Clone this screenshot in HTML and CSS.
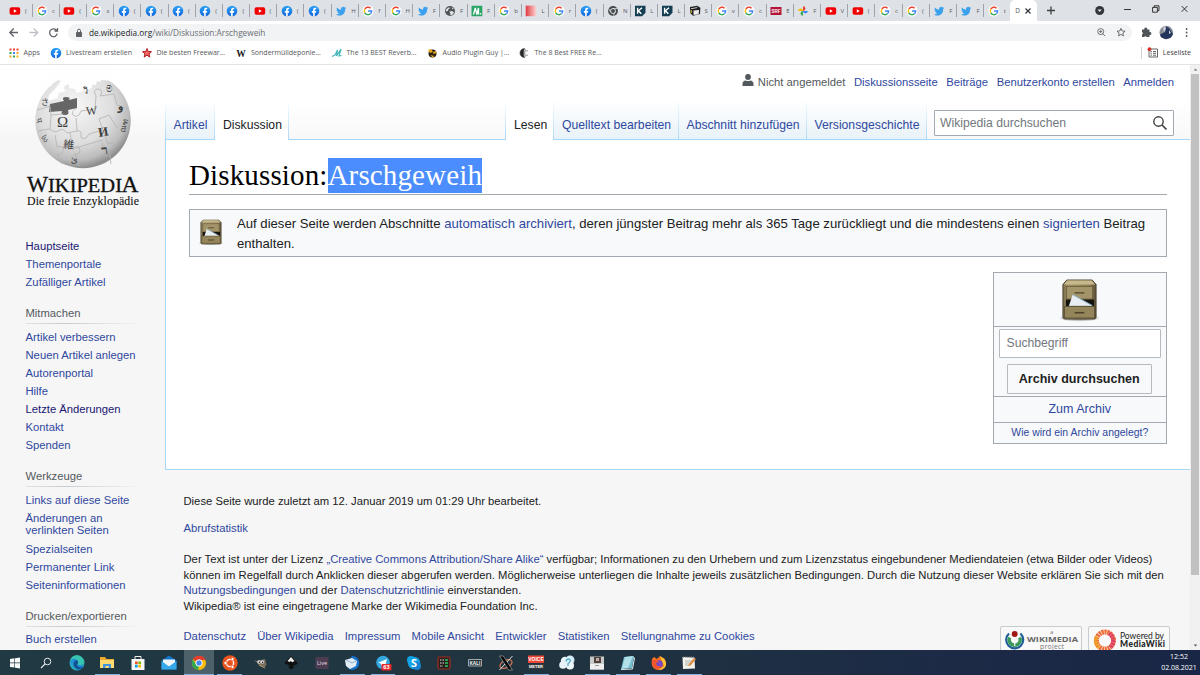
FILE: index.html
```html
<!DOCTYPE html>
<html lang="de">
<head>
<meta charset="utf-8">
<title>Diskussion:Arschgeweih – Wikipedia</title>
<link rel="stylesheet" href="styles.css">
</head>
<body>
<svg class="defs" width="0" height="0" aria-hidden="true">
  <defs>
    <linearGradient id="fbg" x1="0" y1="0" x2="0" y2="1"><stop offset="0" stop-color="#2aa4f6"/><stop offset="1" stop-color="#1264dc"/></linearGradient>
    <linearGradient id="redg"><stop offset="0" stop-color="#e23a40"/><stop offset="1" stop-color="#fbd5d5"/></linearGradient>
    <linearGradient id="wood" x1="0" y1="0" x2="1" y2="0"><stop offset="0" stop-color="#75684a"/><stop offset=".15" stop-color="#aa9a6e"/><stop offset=".8" stop-color="#958459"/><stop offset="1" stop-color="#5c5038"/></linearGradient>
    <radialGradient id="shadow"><stop offset="0" stop-color="#333" stop-opacity=".8"/><stop offset="1" stop-color="#333" stop-opacity="0"/></radialGradient>
    <radialGradient id="ball" cx=".42" cy=".35" r=".65"><stop offset="0" stop-color="#f6f6f6"/><stop offset=".6" stop-color="#dedede"/><stop offset=".87" stop-color="#bcbcbc"/><stop offset="1" stop-color="#8d8d8d"/></radialGradient>
    <linearGradient id="edge" x1="0" y1="1" x2="1" y2="0"><stop offset="0" stop-color="#35c1b1"/><stop offset=".5" stop-color="#1b86dc"/><stop offset="1" stop-color="#4bd06a"/></linearGradient>
  </defs>
  <symbol id="yt" viewBox="0 0 12 12"><rect x=".6" y="2.3" width="10.6" height="7.4" rx="1.8" fill="#f00000"/><path d="M4.8 4.2v3.6L7.8 6z" fill="#fff"/></symbol>
  <symbol id="go" viewBox="0 0 12 12"><circle cx="6" cy="6" r="5.5" fill="#fff"/><g fill="none" stroke-width="1.4"><path d="M8.6 3.2A3.7 3.7 0 0 0 2.8 4.2" stroke="#ea4335"/><path d="M2.8 4.2a3.7 3.7 0 0 0 0 3.6" stroke="#fbbc05"/><path d="M2.8 7.8a3.7 3.7 0 0 0 5.6 1" stroke="#34a853"/><path d="M8.4 8.8A3.6 3.6 0 0 0 9.7 6H6" stroke="#4285f4"/></g></symbol>
  <symbol id="fb" viewBox="0 0 12 12"><circle cx="6" cy="6" r="5.3" fill="url(#fbg)"/><path d="M5.1 11.2V7.7H3.8V6h1.3V4.9c0-1.5.9-2.2 2-2.2l1.1.1v1.4h-.7c-.6 0-.8.4-.8.8v1h1.5l-.3 1.7H6.7v3.5z" fill="#fff"/></symbol>
  <symbol id="tw" viewBox="0 0 12 12"><path d="M1.5 9.3c1.2.1 2.1-.2 2.8-.8-.9-.1-1.6-.6-1.9-1.4h.9C2.3 6.9 1.6 6 1.6 5l.9.3C1.6 4.5 1.4 3.300 1.900 2.400c1 1.300 2.500 2 4.200 2.100-.4-1.900 1-2.700 2-2.700.7 0 1.200.3 1.600.7l1.300-.5-.8 1.200 1-.2-1 1C10.300 8.300 7.400 10.700 4.500 10.600c-1.100 0-2.200-.3-3-.9z" fill="#3ba1ee"/></symbol>
  <symbol id="globe" viewBox="0 0 12 12"><circle cx="6" cy="6" r="5" fill="#53575b"/><path d="M2 4.500 3.800 3l2-.8-.4 1.600-1.600 1 .2 1.200L2 6.200zM5.500 6.500 8 6l2 1.500L8 10l-1.800-.2.200-1.400zM8 2.200l1.800 1.600-1.600.4z" fill="#e4e6e9"/></symbol>
  <symbol id="mm" viewBox="0 0 12 12"><rect x=".5" y=".8" width="10.800" height="10.400" rx=".8" fill="#2aa566"/><path d="M2.500 9.500 4.300 3l1.500 6.500L7.500 3v6.500M9.500 8v1.500" fill="none" stroke="#fff" stroke-width="1.300"/></symbol>
  <symbol id="red" viewBox="0 0 12 12"><rect x=".7" y=".6" width="10.600" height="10.600" fill="url(#redg)"/></symbol>
  <symbol id="chr" viewBox="0 0 12 12"><circle cx="6" cy="6" r="4.900" fill="#474b50"/><circle cx="6" cy="6" r="2.500" fill="#474b50" stroke="#e4e6e9" stroke-width=".9"/><path d="M6 3.500h4.500M3.800 7.200 1.700 3.700M8.200 7.200 6 10.900" stroke="#e4e6e9" stroke-width=".7"/></symbol>
  <symbol id="kk" viewBox="0 0 12 12"><path d="M1 .8h10.500v7L8 11.200H1z" fill="#153e52"/><path d="M3.600 2.800v6M8 2.800 4.400 5.700 7.300 8.800" fill="none" stroke="#fff" stroke-width="1.400"/></symbol>
  <symbol id="cam" viewBox="0 0 12 12"><path d="m1 2 7-1.300 3.400 2L11 9 4 10.800 1.200 8z" fill="#222"/><path d="m4.500 5.400 5.500-.5-.4 4.300-5 .8zM2 3.200l6-1 .3.800-6 1z" fill="#eee"/><path d="M2.200 5v3" stroke="#f7d44a"/></symbol>
  <symbol id="srf" viewBox="0 0 12 12"><rect x=".5" y="2" width="11" height="8" fill="#b21535"/><text x="6" y="7.700" font-family="Liberation Sans" font-size="4.500" font-weight="700" text-anchor="middle" fill="#fff">SRF</text></symbol>
  <symbol id="ph" viewBox="0 0 12 12"><path d="M6 6V1.200A2.400 2.400 0 0 1 6 6z" fill="#ea4335"/><path d="M6 6h4.800A2.400 2.400 0 0 1 6 6z" fill="#4285f4"/><path d="M6 6v4.800A2.400 2.400 0 0 1 6 6z" fill="#34a853"/><path d="M6 6H1.200A2.400 2.400 0 0 1 6 6z" fill="#fbbc05"/></symbol>
  <symbol id="cabinet" viewBox="0 0 40 44"><ellipse cx="20" cy="40" rx="22" ry="3.800" fill="url(#shadow)"/><path d="M3 5.500 7 1h26l4 4.500V39q0 2-2 2H5q-2 0-2-2z" fill="url(#wood)" stroke="#4d4430" stroke-width="1"/><path d="M4 5.500 7.500 1.600h25L36 5.500z" fill="#c5b88d"/><rect x="6.500" y="7.500" width="27" height="13" fill="#a4946a" stroke="#6b5d3c"/><path d="M15 14.200h10" stroke="#574a2e" stroke-width="1.400"/><path d="M6 21h29v8H6z" fill="#15130e"/><path d="m9 28 4-12 21 12z" fill="#e8edf2"/><path d="m13 16 20 11" stroke="#8ab4cb" stroke-width="1"/><path d="M4.500 28h31v12h-31z" fill="#95855a" stroke="#5c4f34"/><path d="M15 34.500h10" stroke="#4f4329" stroke-width="1.600"/></symbol>
</svg>

<header class="browser">
  <div class="tabstrip">
    <div class="tab"><svg><use href="#yt"/></svg><span>(</span></div>
    <div class="tab"><svg><use href="#go"/></svg><span>c</span></div>
    <div class="tab"><svg><use href="#yt"/></svg><span>(</span></div>
    <div class="tab"><svg><use href="#go"/></svg><span>s</span></div>
    <div class="tab"><svg><use href="#fb"/></svg><span>(</span></div>
    <div class="tab"><svg><use href="#fb"/></svg><span>(</span></div>
    <div class="tab"><svg><use href="#fb"/></svg><span>(</span></div>
    <div class="tab"><svg><use href="#fb"/></svg><span>(</span></div>
    <div class="tab"><svg><use href="#fb"/></svg><span>(</span></div>
    <div class="tab"><svg><use href="#yt"/></svg><span>(</span></div>
    <div class="tab"><svg><use href="#fb"/></svg><span>(</span></div>
    <div class="tab"><svg><use href="#fb"/></svg><span>(</span></div>
    <div class="tab"><svg><use href="#tw"/></svg><span>H</span></div>
    <div class="tab"><svg><use href="#go"/></svg><span>f</span></div>
    <div class="tab"><svg><use href="#go"/></svg><span>H</span></div>
    <div class="tab"><svg><use href="#tw"/></svg><span>F</span></div>
    <div class="tab"><svg><use href="#globe"/></svg><span>F</span></div>
    <div class="tab"><svg><use href="#mm"/></svg><span>F</span></div>
    <div class="tab"><svg><use href="#go"/></svg><span>b</span></div>
    <div class="tab"><svg><use href="#red"/></svg><span>L</span></div>
    <div class="tab"><svg><use href="#go"/></svg><span>r</span></div>
    <div class="tab"><svg><use href="#fb"/></svg><span>(</span></div>
    <div class="tab"><svg><use href="#chr"/></svg><span>N</span></div>
    <div class="tab"><svg><use href="#kk"/></svg><span>L</span></div>
    <div class="tab"><svg><use href="#kk"/></svg><span>L</span></div>
    <div class="tab"><svg><use href="#cam"/></svg><span>S</span></div>
    <div class="tab"><svg><use href="#go"/></svg><span>v</span></div>
    <div class="tab"><svg><use href="#go"/></svg><span>c</span></div>
    <div class="tab"><svg><use href="#srf"/></svg><span>E</span></div>
    <div class="tab"><svg><use href="#ph"/></svg><span>F</span></div>
    <div class="tab"><svg><use href="#yt"/></svg><span>V</span></div>
    <div class="tab"><svg><use href="#yt"/></svg><span>(</span></div>
    <div class="tab"><svg><use href="#go"/></svg><span>c</span></div>
    <div class="tab"><svg><use href="#go"/></svg><span>(</span></div>
    <div class="tab"><svg><use href="#tw"/></svg><span>F</span></div>
    <div class="tab"><svg><use href="#tw"/></svg><span>F</span></div>
    <div class="tab last"><svg><use href="#go"/></svg><span>t</span></div>
    <div class="tab-active"><span>D</span><svg viewBox="0 0 8 8"><path d="m1.500 1.500 5 5m0-5-5 5" stroke="#33373b" stroke-width="1.200"/></svg></div>
    <svg class="window-controls" viewBox="0 0 162 21"><path d="M14 6.500v8M10 10.500h8" stroke="#3c4043" stroke-width="1.300"/><circle cx="62.700" cy="10.500" r="4.500" fill="#32363a"/><path d="M60.500 9.500h4.400l-2.200 2.600z" fill="#dee1e6"/><g fill="none" stroke="#222" stroke-width=".9"><path d="M87 9.500h7M115.600 7.400h4.800v4.800h-4.800zM117.200 7.200V5.800h4.800v4.800h-1.400M144.600 6l5.800 5.800m0-5.800-5.800 5.800"/></g></svg>
  </div>
  <div class="toolbar">
    <svg class="nav-icons" viewBox="0 0 68 24"><g fill="none" stroke="#5f6368" stroke-width="1.300"><path d="M18 11.500H9.800M13.800 7.500l-4 4 4 4"/><path d="M29.500 11.500h8.200M33.700 7.500l4 4-4 4" stroke="#bdc1c6"/><path d="M56.700 9.500a3.900 3.900 0 1 0 .6 3.200M57.500 7v3h-3"/></g></svg>
    <div class="omnibox">
      <svg class="lock" viewBox="0 0 8 10"><rect x="1" y="4" width="6" height="5" rx=".7" fill="#5f6368"/><path d="M2.500 4V2.700a1.500 1.500 0 0 1 3 0V4" fill="none" stroke="#5f6368"/></svg>
      <span class="url"><b>de.wikipedia.org</b>/wiki/Diskussion:Arschgeweih</span>
      <svg class="omni-actions" viewBox="0 0 36 17"><g fill="none" stroke="#5f6368" stroke-width=".9"><circle cx="8.700" cy="7.600" r="3"/><path d="m10.900 9.800 2.300 2.300M7.200 7.600h3M8.700 6.100v3M29 4.300l1.200 2.700 2.900.2-2.200 1.900.7 2.800-2.600-1.500-2.500 1.500.7-2.800L25 7.200l2.800-.2z"/></g></svg>
    </div>
    <svg class="toolbar-actions" viewBox="0 0 64 24"><path d="M6 8.500h2.300a1.500 1.500 0 1 1 2.900 0H13.500v2.500a1.500 1.500 0 1 1 0 2.900v2.200h-2.800a1.300 1.300 0 0 0-2.500 0H6v-2.600a1.400 1.400 0 0 0 0-2.600z" fill="#505458"/><circle cx="30.300" cy="11.500" r="6.800" fill="#8a9098"/><path d="M24 13.500 29 11l1-5.500 3 1.500 4 6-2 3.500-5 1.800-5-2z" fill="#25345c"/><path d="m27 7 2-2 1 3-2 3zM33 9l2 3-2 1z" fill="#c8ccd4"/><g fill="#505458"><circle cx="50.600" cy="8" r=".9"/><circle cx="50.600" cy="11.500" r=".9"/><circle cx="50.600" cy="15" r=".9"/></g></svg>
  </div>
  <div class="bookmarks">
    <svg viewBox="0 0 12 12"><path d="M1.500 1.500h2v2h-2z" fill="#ea4335"/><path d="M5 1.500h2v2H5zM8.500 1.500h2v2h-2z" fill="#ea4335"/><path d="M1.500 5h2v2h-2z" fill="#34a853"/><path d="M5 5h2v2H5z" fill="#4285f4"/><path d="M8.500 5h2v2h-2zM1.500 8.500h2v2h-2z" fill="#f0a51a"/><path d="M5 8.500h2v2H5z" fill="#34a853"/><path d="M8.500 8.500h2v2h-2z" fill="#fbbc05"/></svg><span class="bm-t1">Apps</span>
    <svg viewBox="0 0 12 12"><use href="#fb"/></svg><span class="bm-t2">Livestream erstellen</span>
    <svg viewBox="0 0 12 12"><path d="m6 1.500 1.200 3 3.300.2-2.500 2.100.8 3.300L6 8.200l-2.800 1.900.8-3.300-2.500-2.100 3.300-.2z" fill="#e66" stroke="#b11e1e"/></svg><span class="bm-t3">Die besten Freewar...</span>
    <svg viewBox="0 0 12 12"><text x="6" y="9.500" text-anchor="middle" font-family="Liberation Serif" font-size="9.500" font-weight="700" fill="#222">W</text></svg><span class="bm-t4">Sondermülldeponie...</span>
    <svg viewBox="0 0 12 12"><path d="M1 9.500 4 8l2.500-5-1 6L10 2 8 9l2.500-.5" fill="none" stroke="#43b7b8" stroke-width="1.200"/></svg><span class="bm-t5">The 13 BEST Reverb...</span>
    <svg viewBox="0 0 12 12"><circle cx="5.500" cy="6.500" r="4" fill="#292013"/><path d="m1 3 3-1 2 3-3 1zM6 5l3-1 .5 2-3 1zM3.500 8l4 1-2 1.500z" fill="#e6a91c"/></svg><span class="bm-t6">Audio Plugin Guy |...</span>
    <svg viewBox="0 0 12 12"><path d="M5.500 1.500C-.5 2-.5 10 5.500 10.500 4 7.500 4 4.500 5.500 1.500z" fill="#26282a" stroke="#26282a" stroke-width=".6"/><path d="M6.500 2.500c-1 2-1 5 0 7M8 3v1.500m0 3V9" stroke="#777" fill="none"/></svg><span class="bm-t7">The 8 Best FREE Re...</span>
    <div class="readinglist"><svg viewBox="0 0 12 12"><path d="M2 2h8.500v8H2zM3.500 4.500h1.400m1.100 0h3M3.500 6.300h1.400m1.100 0h3M3.500 8.200h1.400m1.100 0h3" fill="none" stroke="#555" stroke-width=".9"/><circle cx="2.500" cy="2.200" r="1.900" fill="#d93025"/></svg><span>Leseliste</span></div>
  </div>
</header>

<div class="page">
  <aside class="sidebar">
    <svg class="logo" viewBox="0 0 126 140">
      <circle cx="63" cy="51.500" r="47.700" fill="url(#ball)"/>
      <path d="M36 0H92V12L81 11l-1 2-3-1-1 4q-5-2-4 3l-15 5-2-4-6-1q1-5-3-3t0 6l-7 2-1 5-10 3 1-6 6-6 6-8-3-1-4 2-3 4-4 1-3 4-4 1 4-9 9-8z" fill="#fefefe"/>
      <path d="m30 35 14-3q-3-4 2-4t3 3l8-2v10l-9 2q2 5-3 5t-3-4l-13 1z" fill="#666"/>
      <g fill="none" stroke="#b2b2b2" stroke-width=".8"><path d="M17 41q8-2 13-4l1 9 12-1M57 39q-6 3-4 7 3 3 6 0l2-4 14-2 1-13q-4-7 3-7 5 2 1 7l14-2 3 11 11 4M31 46l-1 14-12 2M30 60q5 5 10 1 3-2 7 3l10-2-1-13M57 62q5-1 4 4t5 3l3-4 14-4 5 14q6-3 6 2 0 5-5 3l2 15M83 61l-4-11 10-4 8 13M50 64l3 15q6-3 7 2 0 5-5 4l4 12M56 79l16-5 11-3M35 66l2 12q8-2 6 4-2 5-6 3l5 10M82 74l5 14"/></g>
      <g fill="#3d3d3d" font-family="'Liberation Serif', 'Noto Sans CJK JP', serif"><text x="37" y="58" font-size="15">Ω</text><text x="66" y="46" font-size="12" transform="rotate(-3 66 46)">W</text><text x="79" y="68" font-size="13" font-weight="700" transform="rotate(-10 79 68)">И</text><text x="43" y="79" font-size="11" transform="rotate(5 43 79)">維</text><text x="82" y="86" font-size="13" font-weight="700" transform="rotate(-8 82 86)">ר</text><text x="63" y="25" font-size="9">วิ</text><text x="86" y="23" font-size="9">ම</text><text x="98" y="41" font-size="11" font-weight="700">و</text><text x="21" y="36" font-size="8">さ</text><text x="19" y="52" font-size="8" transform="rotate(75 19 49)">प</text><text x="21" y="68" font-size="7" transform="rotate(60 21 68)">სა</text><text x="51" y="94" font-size="9" transform="rotate(-8 51 94)">ئ</text><text x="102" y="60" font-size="8" transform="rotate(-80 106 60)">ณฑ</text></g>
      <g fill="#111" stroke="#111" stroke-width=".3" font-family="Liberation Serif"><text x="7" y="122.500" font-size="23.500" textLength="21" lengthAdjust="spacingAndGlyphs">W</text><text x="28" y="122.500" font-size="18.500" textLength="74" lengthAdjust="spacingAndGlyphs">IKIPEDI</text><text x="101.500" y="122.500" font-size="23.500" textLength="17" lengthAdjust="spacingAndGlyphs">A</text><text x="7" y="136" font-size="11.800" stroke-width=".1" textLength="112" lengthAdjust="spacing">Die freie Enzyklopädie</text></g>
    </svg>
    <nav class="portal first"><a class="visited">Hauptseite</a><a>Themenportale</a><a>Zufälliger Artikel</a></nav>
    <nav class="portal"><h3>Mitmachen</h3><a>Artikel verbessern</a><a>Neuen Artikel anlegen</a><a>Autorenportal</a><a>Hilfe</a><a class="visited">Letzte Änderungen</a><a>Kontakt</a><a>Spenden</a></nav>
    <nav class="portal"><h3>Werkzeuge</h3><a>Links auf diese Seite</a><a>Änderungen an<br>verlinkten Seiten</a><a>Spezialseiten</a><a>Permanenter Link</a><a>Seiteninformationen</a></nav>
    <nav class="portal"><h3>Drucken/exportieren</h3><a>Buch erstellen</a></nav>
  </aside>

  <div class="main">
    <div class="head">
      <div class="personal"><svg viewBox="0 0 12 12"><circle cx="6" cy="3" r="2.900" fill="#54595d"/><path d="M.5 12V9.800C.5 7.600 2.200 7 3.500 6.600q2.500 1 5 0c1.300.4 3 1 3 3.200V12z" fill="#54595d"/></svg><span>Nicht angemeldet</span><a>Diskussionsseite</a><a>Beiträge</a><a>Benutzerkonto erstellen</a><a>Anmelden</a></div>
      <div class="navtabs">
        <div class="vtab v1"><a>Artikel</a></div><div class="vtab on v2">Diskussion</div>
        <div class="tabgap"></div>
        <div class="vtab on v3">Lesen</div><div class="vtab v4"><a>Quelltext bearbeiten</a></div><div class="vtab v5"><a>Abschnitt hinzufügen</a></div><div class="vtab v6"><a>Versionsgeschichte</a></div>
        <div class="search"><span>Wikipedia durchsuchen</span><svg viewBox="0 0 16 16"><circle cx="6.500" cy="6.500" r="4.700" fill="none" stroke="#404244" stroke-width="1.400"/><path d="m10 10 4.500 4.500" stroke="#404244" stroke-width="1.700"/></svg></div>
      </div>
    </div>
    <main class="content">
      <h1>Diskussion:<mark>Arschgeweih</mark></h1>
      <div class="notice"><svg viewBox="0 0 40 44"><use href="#cabinet"/></svg><p>Auf dieser Seite werden Abschnitte <a>automatisch archiviert</a>, deren jüngster Beitrag mehr als 365 Tage zurückliegt und die mindestens einen <a>signierten</a> Beitrag<br>enthalten.</p></div>
      <div class="archive">
        <div class="archive-icon"><svg viewBox="0 0 40 44"><use href="#cabinet"/></svg></div>
        <div class="archive-form"><div class="field">Suchbegriff</div><div class="button">Archiv durchsuchen</div></div>
        <div class="archive-link"><a>Zum Archiv</a></div>
        <div class="archive-help"><a>Wie wird ein Archiv angelegt?</a></div>
      </div>
    </main>
    <footer class="footer">
      <p>Diese Seite wurde zuletzt am 12. Januar 2019 um 01:29 Uhr bearbeitet.</p>
      <p class="stat"><a>Abrufstatistik</a></p>
      <p class="license">Der Text ist unter der Lizenz <a>„Creative Commons Attribution/Share Alike“</a> verfügbar; Informationen zu den Urhebern und zum Lizenzstatus eingebundener Mediendateien (etwa Bilder oder Videos)<br>können im Regelfall durch Anklicken dieser abgerufen werden. Möglicherweise unterliegen die Inhalte jeweils zusätzlichen Bedingungen. Durch die Nutzung dieser Website erklären Sie sich mit den<br><a>Nutzungsbedingungen</a> und der <a>Datenschutzrichtlinie</a> einverstanden.<br>Wikipedia® ist eine eingetragene Marke der Wikimedia Foundation Inc.</p>
      <div class="footer-row">
        <div class="places"><a>Datenschutz</a><a>Über Wikipedia</a><a>Impressum</a><a>Mobile Ansicht</a><a>Entwickler</a><a>Statistiken</a><a>Stellungnahme zu Cookies</a></div>
        <div class="badge"><svg viewBox="0 0 80 29"><g fill="none" stroke-width="2.200"><path d="M8 6.500a8.500 8.500 0 1 0 11.400 0" stroke="#1f5d99"/><path d="M8.700 10.500a5.500 5.500 0 1 0 10 0" stroke="#3a9a5c" stroke-width="3.400"/><path d="M13.700 10v9" stroke="#f4f4f4" stroke-width="1.200"/></g><circle cx="13.700" cy="7" r="3" fill="#a01717"/><g font-family="Open Sans" fill="#777"><text x="49" y="6.700" font-size="6">a</text><text x="26" y="14.700" font-size="7.800" font-weight="700" fill="#666" textLength="51" lengthAdjust="spacingAndGlyphs">WIKIMEDIA</text><text x="39" y="22" font-size="6.800" textLength="24">project</text></g></svg></div>
        <div class="badge"><svg viewBox="0 0 80 29"><circle cx="16" cy="13.500" r="8.500" fill="none" stroke="#ed6c37" stroke-width="5" stroke-dasharray="2.200 .6"/><path d="M10 20.500a8.500 8.500 0 0 1-2-11" fill="none" stroke="#f2a52a" stroke-width="4" stroke-dasharray="2 .6"/><path d="M20 6.500a8.500 8.500 0 0 1 1 14" fill="none" stroke="#dc3c67" stroke-width="4" stroke-dasharray="2 .6"/><circle cx="16" cy="13.500" r="5.600" fill="#f9f9f9"/><g font-family="Lato" font-size="8.500" fill="#222"><text x="31" y="11.500" textLength="44">Powered by</text><text x="31" y="20" font-weight="900" textLength="45">MediaWiki</text></g></svg></div>
      </div>
    </footer>
  </div>
  <div class="scrollbar"><svg viewBox="0 0 10 8"><path d="m3 5 2-2 2 2z" fill="#777"/></svg><div class="thumb"></div><svg class="down" viewBox="0 0 10 8"><path d="m3 3 2 2 2-2z" fill="#555"/></svg></div>
</div>

<div class="taskbar">
  <div class="task"><svg viewBox="0 0 18 18"><path d="m4 4.900 4.400-.6v4.300H4zM9 4.200l5-.7v5.100H9zM4 9.300h4.400v4.300L4 13zM9 9.300h5v5.100l-5-.7z" fill="#f5f7f8"/></svg></div>
  <div class="task"><svg viewBox="0 0 18 18"><circle cx="10.500" cy="7.500" r="3.300" fill="none" stroke="#e7eaec"/><path d="m8 10-4 4" stroke="#e7eaec" stroke-width="1.100"/></svg></div>
  <div class="task"><svg viewBox="0 0 18 18"><circle cx="9" cy="9" r="7.500" fill="url(#edge)"/><path d="M7.500 7c-3 1-3 7 3 8.500 2 0 4-1 5-2.500-5 1.500-7-1-6.500-3.500l6 1C17 5 10 2 7.500 7z" fill="#12508e"/><path d="M2 7c4-4 9-1 8 2 0 1.300-1 1.500 1 2 3 .5 6-1 5.200-4C14 0 4-1 2 7z" fill="#37c3b2"/></svg></div>
  <div class="task open"><svg viewBox="0 0 18 18"><path d="M2 3h5l1.500 2H16v9H2z" fill="#e9aa2d"/><path d="M2 6h14v8H2z" fill="#ffdb72"/><path d="M5 14v-4h8v4h-2.300v-2H7.300v2z" fill="#3d94dc"/></svg></div>
  <div class="task"><svg viewBox="0 0 18 18"><path d="M6 5V2.500h6V5" fill="none" stroke="#eee"/><path d="M2.500 5h13v11h-13z" fill="#f7f7f7"/><path d="M6 7.500h2.700v2.700H6z" fill="#f25022"/><path d="M9.300 7.500H12v2.700H9.300z" fill="#7fba00"/><path d="M6 10.800h2.700v2.700H6z" fill="#00a4ef"/><path d="M9.300 10.800H12v2.700H9.300z" fill="#ffb900"/></svg></div>
  <div class="task"><svg viewBox="0 0 18 18"><path d="m1.500 6.500 7.500-5 7.500 5v9h-15z" fill="#1173c6"/><path d="M3 5.500h12V9l-6 4-6-4z" fill="#eef6fc"/><path d="m1.500 7 7.500 5.500L16.500 7v8.500h-15z" fill="#36a9ea"/></svg></div>
  <div class="task active"><svg viewBox="0 0 18 18"><circle cx="9" cy="9" r="7" fill="#fbbc05"/><path d="M9 9 3 5.400A7 7 0 0 1 15.500 6H9z" fill="#e33b2e"/><path d="m9 9-.7 7A7 7 0 0 1 2.900 5.500L6.500 11z" fill="#2da94f"/><circle cx="9" cy="9" r="3.200" fill="#4285f4" stroke="#fff"/></svg></div>
  <div class="task open"><svg viewBox="0 0 18 18"><circle cx="9" cy="9" r="7.700" fill="#e95420"/><circle cx="9" cy="9" r="3.600" fill="none" stroke="#fff" stroke-width="1.400"/><g fill="#fff" stroke="#e95420" stroke-width=".7"><circle cx="4.500" cy="9" r="1.600"/><circle cx="11.500" cy="5" r="1.600"/><circle cx="11.500" cy="13" r="1.600"/></g></svg></div>
  <div class="task"><svg viewBox="0 0 18 18"><path d="m3 6 3 1 3-1 5-1 1.500 6-2 2-5-1-2-3z" fill="#786e5d"/><circle cx="8" cy="8" r="1.700" fill="#eee"/><circle cx="11.500" cy="8" r="1.700" fill="#ddd"/><circle cx="8.300" cy="8.200" r=".7"/><circle cx="11.700" cy="8.200" r=".7"/><path d="m8 11 6 3" stroke="#ba9b69"/></svg></div>
  <div class="task"><svg viewBox="0 0 18 18"><path d="M9 2 3 8.300q-1 1.500 1.500 2l3 1-1 2L9 15.500l3-2-1-1.700 3.500-1.300q2-.7.500-2.200z" fill="#111"/><path d="M9 3 5.500 7l2 1 1.200-1 1.500 1.300L12.500 7z" fill="#eee"/></svg></div>
  <div class="task"><svg viewBox="0 0 18 18"><path d="M2.500 3h13v12h-13z" fill="#4b3c50"/><text x="9" y="11" text-anchor="middle" font-size="5.500" font-family="Open Sans" fill="#e4dce7">Live</text></svg></div>
  <div class="task open"><svg viewBox="0 0 18 18"><path d="M9 2a7 7 0 1 1-5.500 11C8 16 11 11 7 5z" fill="#1770c9"/><path d="m2 6 7-2 5 3-1 5-6 3-4-3z" fill="#e3edf6"/><path d="m3 6 6 3 4-2" fill="none" stroke="#8eaecb"/></svg></div>
  <div class="task open"><svg viewBox="0 0 18 18"><circle cx="9" cy="8.500" r="6.800" fill="#35a7df"/><path d="m4 8.700 9-3.800-1.800 7-2.500-1.600-1.600 1.600-.2-2.300z" fill="#fff"/><rect x="7.500" y="10" width="10" height="6.500" rx="1" fill="#e62929"/><text x="12.500" y="15" text-anchor="middle" font-size="5.500" font-family="Open Sans" font-weight="700" fill="#fff">63</text></svg></div>
  <div class="task"><svg viewBox="0 0 18 18"><circle cx="9" cy="9" r="6.200" fill="#12a3e6"/><circle cx="6" cy="6" r="4" fill="#12a3e6"/><circle cx="12" cy="12" r="4" fill="#1581d0"/><text x="9" y="13" text-anchor="middle" font-size="11" font-family="Open Sans" font-weight="700" fill="#fff">S</text></svg></div>
  <div class="task"><svg viewBox="0 0 18 18"><rect x="3" y="3" width="12" height="12" rx="1.500" fill="#28201e" stroke="#a22b20" stroke-width="1.200"/><path d="M5 6h4M5 9h4M5 12h3" stroke="#ddd" stroke-dasharray="1 .5"/><path d="M10 6h3M10 9h3M10 12h3" stroke="#2dc561" stroke-width="1.300"/></svg></div>
  <div class="task"><svg viewBox="0 0 18 18"><path d="M2.500 5.500h13v6.500h-13z" fill="#26343a" stroke="#c2c8ca" stroke-width=".8"/><text x="9" y="10.600" text-anchor="middle" font-size="4.800" font-family="Open Sans" font-weight="700" fill="#e8ebec">KALI</text></svg></div>
  <div class="task"><svg viewBox="0 0 18 18"><ellipse cx="9" cy="10" rx="6.500" ry="3.700" transform="rotate(-28 9 10)" fill="none" stroke="#d0724e" stroke-width="1.200"/><path d="M2.500 2h3.800l9.200 14h-3.800z" fill="#080808" stroke="#ccc" stroke-width=".5"/><path d="m15.500 2-5.500 6M8 10l-5.500 6" stroke="#eee" stroke-width=".9" fill="none"/></svg></div>
  <div class="task open"><svg viewBox="0 0 18 18"><path d="M1 1.500h16v7.500H1z" fill="#ed4434"/><path d="M1 10h16v5H1z" fill="#35393b"/><g text-anchor="middle" font-family="Liberation Sans" font-weight="700" fill="#fff"><text x="9" y="7.200" font-size="5">VOICE</text><text x="9" y="14.200" font-size="4">METER</text></g></svg></div>
  <div class="task"><svg viewBox="0 0 18 18"><circle cx="7" cy="7" r="4.200" fill="#e8f3f7"/><circle cx="12" cy="6" r="4.500" fill="#d5edf4"/><circle cx="5" cy="11" r="3.800" fill="#e8f3f7"/><circle cx="12" cy="11.500" r="4" fill="#eef6f9"/><path d="M8 7.500q.5-3 3-2.300t.5 3.300l-1.500 1v2.500" fill="none" stroke="#4aa5c6" stroke-width="1.200"/></svg></div>
  <div class="task open"><svg viewBox="0 0 18 18"><path d="M2 2.500h14v13H2z" fill="#c7cac9"/><path d="M6 3h7v6H6z" fill="#51413f"/><path d="M8 4h3v3H8z" fill="#bcaaa6"/><path d="M2 10h14v5.500H2z" fill="#eee"/><path d="M7 11h4v1H7z" fill="#999"/></svg></div>
  <div class="task open"><svg viewBox="0 0 18 18"><path d="m5 3 10-1-2 12-11 1z" fill="#74bdcc"/><path d="m6 3 8-1-5 12-6 .8z" fill="#b1e1e8"/><path d="M14 4h1.500L13.500 15 2 15.500" fill="none" stroke="#e6edf0"/></svg></div>
  <div class="task open"><svg viewBox="0 0 18 18"><path d="M2 5 4 3l3 2 3-3 2 3 2-1c3 4 3 11-5 12C2 16 1 10 2 5z" fill="#fa701d"/><path d="M10 2c5 3 6 5 6 8 0 4-4 6-7 6l5-4z" fill="#ffc733"/><circle cx="9" cy="10" r="3.800" fill="#7749c5"/><path d="M2 6h4l3 2-3 1 1 3h4l-3 3c-4 0-6-3-6-9z" fill="#f2542f"/></svg></div>
  <div class="task open"><svg viewBox="0 0 18 18"><path d="m2.500 3 12 .5.500 11-12 .5z" fill="#f2f2eb"/><path d="M5 7h7M5 9h6M5 11h6" stroke="#999" stroke-width=".7"/><path d="m9 10 5-6 2 1-5 6-3 1z" fill="#e18c3c"/><path d="M3 3h11" stroke="#777" stroke-dasharray="1 1"/></svg></div>
  <div class="clock"><span>12:52</span><span>02.08.2021</span></div>
</div>
</body>
</html>
```
FILE: styles.css
```css
* { box-sizing: border-box; }
body { margin: 0; width: 1200px; height: 675px; overflow: hidden; background: #f6f6f6; font-family: "Liberation Sans", Arial, "Noto Sans CJK JP", sans-serif; color: #202122; }
svg { display: block; flex: none; }
.defs { position: absolute; }
a { color: #2f489f; text-decoration: none; }
a.visited { color: #1a1675; }
p, h1, h3 { margin: 0; font-weight: 400; }

/* Browser window */
.browser { height: 65px; background: #fff; border-bottom: 1px solid #e3e4e6; font-family: "Open Sans", "Noto Sans", sans-serif; color: #55585c; }
.tabstrip { height: 21px; display: flex; background: #dee1e6; padding-left: 5.4px; }
.tab { width: 27.2px; flex: none; display: flex; align-items: center; padding-left: 3.5px; position: relative; font-size: 6px; }
.tab svg { width: 12px; height: 12px; margin-right: 4px; }
.tab span { line-height: 12px; }
.tab::after { content: ""; position: absolute; right: 0; top: 4px; height: 13px; width: 1px; background: #a0a4a9; }
.tab.last { width: 26px; }
.tab.last::after { display: none; }
.tab-active { width: 27px; flex: none; display: flex; align-items: center; gap: 4px; padding-left: 5px; font-size: 6.5px; background: #fff; border-radius: 5px 5px 0 0; }
.tab-active svg { width: 8px; height: 8px; }
.window-controls { width: 162px; height: 21px; }
.toolbar { height: 23px; display: flex; align-items: center; }
.nav-icons { width: 68px; height: 24px; }
.omnibox { width: 1064px; height: 17px; flex: none; display: flex; align-items: center; padding: 0 4px 0 7px; background: #f1f3f4; border-radius: 9px; }
.lock { width: 8px; height: 10px; margin-right: 6px; }
.url { flex: 1; font-size: 8.25px; line-height: 17px; color: #6b6f73; }
.url b { font-weight: 400; color: #25282b; }
.omni-actions { width: 36px; height: 17px; }
.toolbar-actions { width: 64px; height: 24px; margin-left: 4px; }
.bookmarks { height: 17px; display: flex; align-items: center; padding-left: 7.5px; font-size: 7px; white-space: nowrap; }
.bookmarks svg { width: 12px; height: 12px; margin-right: 4px; }
.bm-t1 { width: 26.5px; }
.bm-t2 { width: 74.5px; }
.bm-t3 { width: 78.5px; }
.bm-t4 { width: 79.5px; }
.bm-t5 { width: 80px; }
.bm-t6 { width: 76px; }
.readinglist { margin-left: auto; display: flex; align-items: center; padding-right: 9px; padding-left: 5px; border-left: 1px solid #d0d3d6; color: #3c4043; }

/* Wiki page */
.page { height: 585px; display: flex; overflow: hidden; }
.sidebar { width: 165px; flex: none; padding-top: 4px; background: linear-gradient(#fff 0, #fff 37px, #f6f6f6 75px); }
.logo { width: 126px; height: 140px; margin-left: 20px; }
.portal { padding-left: 25.5px; font-size: 11.25px; line-height: 12.66px; }
.portal.first { padding-top: 31px; }
.portal h3 { width: 116px; height: 17px; margin: 12.1px 0 7.3px; padding-top: 1px; font-size: 11.25px; line-height: 13px; color: #54595d; }
.portal h3::after { content: ""; display: block; height: 1px; margin-top: 3px; background: linear-gradient(to right, #e2e3e4, #c8ccd1 33%, #f6f6f6); }
.portal a { display: block; padding-bottom: 5.45px; }
.main { width: 1025px; flex: none; }
.head { height: 74px; padding-top: 9.500px; background: linear-gradient(#fff 50%, #f8f8f8); }
.personal { height: 14px; display: flex; justify-content: flex-end; align-items: center; gap: 8.5px; padding-right: 16px; font-size: 11.25px; line-height: 14px; color: #54595d; white-space: nowrap; }
.personal svg { width: 12px; height: 12px; margin: -3px -5px 0 0; }
.navtabs { height: 38px; margin-top: 12.500px; display: flex; align-items: stretch; }
.vtab { flex: none; padding: 17px 0 0 8px; font-size: 12.19px; line-height: 14px; white-space: nowrap; background: linear-gradient(#fff, #e8f2f8); }
.vtab, .tabgap { border: 0 solid; border-right-width: 1px; border-image: linear-gradient(#fff, #a7d7f9) 1; }
.vtab.on { height: 39px; background: #fff; position: relative; }
.v1 { width: 50px; border-left-width: 1px; padding-left: 7.5px; }
.v2 { width: 74px; }
.v3 { width: 48px; }
.v4 { width: 124.500px; }
.v5 { width: 128px; }
.vtab.v6 { flex: 1; }
.tabgap { width: 217px; }
.search { width: 240px; height: 26px; margin: 9px 16px 0 7.5px; border: 1px solid #a2a9b1; border-radius: 1px; background: #fff; display: flex; align-items: center; justify-content: space-between; padding: 0 5px; font-size: 12.19px; color: #72777d; }
.search svg { width: 16px; height: 16px; }
.content { height: 331px; background: #fff; border: 1px solid #a7d7f9; border-right: 0; padding: 18px 23px 0; }
.content h1 { height: 37px; border-bottom: 1px solid #a2a9b1; font: 29px/35px "Liberation Serif", serif; letter-spacing: 0.14px; color: #000; white-space: nowrap; }
.content mark { display: inline-block; height: 35px; background: #4b8dfc; color: #fff; }
.notice { margin-top: 14px; height: 48px; border: 1px solid #a2a9b1; background: #f8f9fa; display: flex; padding-left: 9px; font-size: 13.14px; line-height: 19.6px; white-space: nowrap; }
.notice svg { width: 24px; height: 27px; margin: 9px 14px 0 0; }
.notice p { padding-top: 4px; }
.archive { width: 174.5px; height: 172px; margin: 15px 0 0 auto; border: 1px solid #a2a9b1; background: #f8f9fa; text-align: center; }
.archive-icon { height: 53px; padding-top: 6px; display: flex; justify-content: center; }
.archive-icon svg { width: 39px; height: 43px; }
.archive-form { height: 71px; border-top: 1px solid #a2a9b1; border-bottom: 1px solid #a2a9b1; padding: 2px 5px; }
.field { height: 29px; line-height: 27px; background: #fff; border: 1px solid #b5bac0; border-radius: 1px; text-align: left; padding-left: 7px; font-size: 12.19px; color: #72777d; }
.button { height: 30px; margin: 6px 9px 0 8px; line-height: 28px; border: 1px solid #b5bac0; border-radius: 1px; font-size: 12.5px; font-weight: 700; white-space: nowrap; }
.archive-link { height: 26px; line-height: 24px; font-size: 12.5px; border-bottom: 1px solid #a2a9b1; }
.archive-help { font-size: 10.45px; line-height: 19px; }
.footer { padding: 24px 16px 0 18.5px; font-size: 11.26px; line-height: 15.7px; white-space: nowrap; }
.stat { margin-top: 11px; }
.license { margin-top: 15.5px; }
.footer-row { display: flex; gap: 6px; margin-top: 11px; }
.places { display: flex; gap: 11.2px; flex: 1; padding-top: 3.500px; }
.badge { width: 82px; height: 31px; border: 1px solid #c9cccf; border-radius: 2px; background: #f9f9f9; }
.badge:last-child { margin-right: 4px; }
.badge svg { width: 80px; height: 29px; }
.scrollbar { width: 10px; flex: none; display: flex; flex-direction: column; background: #f1f1f1; border-left: 1px solid #eee; }
.scrollbar svg { width: 9px; height: 9px; }
.thumb { height: 501px; width: 8px; background: #c1c1c1; }
.scrollbar .down { margin-top: auto; }

/* Windows taskbar */
.taskbar { height: 25px; display: flex; background: linear-gradient(90deg, #203942, #20343f 45%, #1c2a46 80%, #192645); }
.task { width: 30.65px; flex: none; height: 25px; display: flex; justify-content: center; padding-top: 4px; position: relative; }
.task svg { width: 18px; height: 18px; }
.task.active { background: #4c6169; }
.task.open::after, .task.active::after { content: ""; position: absolute; left: 3px; right: 3px; bottom: 0; height: 1.5px; background: #83b3dc; }
.task.active::after { left: 0; right: 0; }
.clock { margin-left: auto; width: 42px; display: flex; flex-direction: column; align-items: center; font: 7px/11px "Open Sans", sans-serif; color: #fff; padding-top: 1px; }
```
